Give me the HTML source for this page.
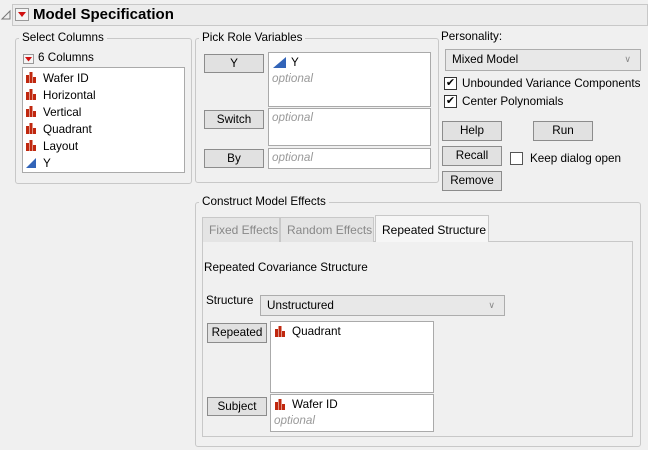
<!DOCTYPE html>
<html><head><style>
*{box-sizing:border-box;margin:0;padding:0}
body{width:648px;height:450px;background:#f0f0f0;font-family:"Liberation Sans",sans-serif;font-size:11.7px;color:#000;position:relative;overflow:hidden}
.a{position:absolute}
.grp{position:absolute;border:1px solid #c8c8c8;border-radius:3px}
.lbl{position:absolute;background:#f0f0f0;padding:0 3px;line-height:14px}
.box{position:absolute;background:#fff;border:1px solid #aaa}
.btn{position:absolute;background:#e1e1e1;border:1px solid #8c8c8c;text-align:center;line-height:17px}
.opt{color:#999;font-style:italic}
.dd{position:absolute;background:#e8e8e8;border:1px solid #adadad;padding-left:6px;line-height:19px}
.cb{position:absolute;width:13px;height:13px;background:#fff;border:1px solid #333;font-size:11px;line-height:11px;text-align:center}
.tab{position:absolute;border:1px solid #c8c8c8;border-bottom:none;background:#e4e4e4;color:#888;line-height:24px;padding-left:6px;font-size:12px}
svg.i{position:absolute}
</style></head><body>
<svg class="i" style="left:0;top:0" width="12" height="22"><path d="M2 19 L10 11 L10 19 Z" fill="none" stroke="#777"/></svg>
<div class="a" style="left:12px;top:4px;width:636px;height:22px;border:1px solid #c8c8c8;background:#ececec"></div>
<svg class="i" style="left:15px;top:8px" width="14" height="13"><rect x="0.5" y="0.5" width="13" height="12" fill="#f4f4f4" stroke="#999"/><path d="M3 4 L11 4 L7 9Z" fill="#d01010"/></svg>
<div class="a" style="left:33px;top:5px;font-size:15px;font-weight:bold;line-height:20px">Model Specification</div>

<div class="grp" style="left:15px;top:38px;width:177px;height:146px"></div>
<div class="lbl" style="left:19px;top:31px">Select Columns</div>
<svg class="i" style="left:23px;top:54px" width="11" height="10"><rect x="0.5" y="0.5" width="10" height="9" fill="#f4f4f4" stroke="#999"/><path d="M2 3 L9 3 L5.5 7.5Z" fill="#d01010"/></svg>
<div class="a" style="left:38px;top:51px;line-height:14px">6 Columns</div>
<div class="box" style="left:22px;top:67px;width:163px;height:106px"></div>
<svg class="i" style="left:26px;top:71px" width="12" height="100">
<g fill="#c0280f">
<g transform="translate(0,1)"><rect x="0" y="3" width="3" height="8"/><rect x="3.5" y="0" width="3" height="11"/><rect x="7" y="5" width="3" height="6"/></g>
<g transform="translate(0,18)"><rect x="0" y="3" width="3" height="8"/><rect x="3.5" y="0" width="3" height="11"/><rect x="7" y="5" width="3" height="6"/></g>
<g transform="translate(0,35)"><rect x="0" y="3" width="3" height="8"/><rect x="3.5" y="0" width="3" height="11"/><rect x="7" y="5" width="3" height="6"/></g>
<g transform="translate(0,52)"><rect x="0" y="3" width="3" height="8"/><rect x="3.5" y="0" width="3" height="11"/><rect x="7" y="5" width="3" height="6"/></g>
<g transform="translate(0,69)"><rect x="0" y="3" width="3" height="8"/><rect x="3.5" y="0" width="3" height="11"/><rect x="7" y="5" width="3" height="6"/></g>
</g>
<path d="M0 97 L10 87 L10 97 Z" fill="#3264b8"/></svg>
<div class="a" style="left:43px;top:70px;line-height:17px">Wafer ID<br>Horizontal<br>Vertical<br>Quadrant<br>Layout<br>Y</div>

<div class="grp" style="left:195px;top:38px;width:244px;height:145px"></div>
<div class="lbl" style="left:199px;top:31px">Pick Role Variables</div>
<div class="btn" style="left:204px;top:54px;width:60px;height:19px">Y</div>
<div class="box" style="left:268px;top:52px;width:163px;height:55px"></div>
<svg class="i" style="left:273px;top:56px" width="14" height="13"><path d="M0 12 L13 1 L13 12 Z" fill="#3264b8"/></svg>
<div class="a" style="left:291px;top:55px;line-height:15px">Y</div>
<div class="a opt" style="left:272px;top:72px">optional</div>
<div class="btn" style="left:204px;top:110px;width:60px;height:19px">Switch</div>
<div class="box" style="left:268px;top:108px;width:163px;height:38px"></div>
<div class="a opt" style="left:272px;top:111px">optional</div>
<div class="btn" style="left:204px;top:149px;width:60px;height:19px">By</div>
<div class="box" style="left:268px;top:148px;width:163px;height:21px"></div>
<div class="a opt" style="left:272px;top:151px">optional</div>

<div class="a" style="left:441px;top:30px;line-height:14px">Personality:</div>
<div class="dd" style="left:445px;top:49px;width:196px;height:22px">Mixed Model<span style="position:absolute;right:9px;top:0;color:#888;font-size:9px">&#8744;</span></div>
<div class="cb" style="left:444px;top:77px">✔</div>
<div class="a" style="left:462px;top:76px;line-height:15px">Unbounded Variance Components</div>
<div class="cb" style="left:444px;top:95px">✔</div>
<div class="a" style="left:462px;top:94px;line-height:15px">Center Polynomials</div>
<div class="btn" style="left:442px;top:121px;width:60px;height:20px">Help</div>
<div class="btn" style="left:533px;top:121px;width:60px;height:20px">Run</div>
<div class="btn" style="left:442px;top:146px;width:60px;height:20px">Recall</div>
<div class="cb" style="left:510px;top:152px;border-color:#555"></div>
<div class="a" style="left:530px;top:151px;line-height:15px">Keep dialog open</div>
<div class="btn" style="left:442px;top:171px;width:60px;height:20px">Remove</div>

<div class="grp" style="left:195px;top:202px;width:446px;height:245px"></div>
<div class="lbl" style="left:199px;top:195px">Construct Model Effects</div>
<div class="a" style="left:202px;top:241px;width:431px;height:196px;border:1px solid #c8c8c8"></div>
<div class="tab" style="left:202px;top:217px;width:78px;height:25px">Fixed Effects</div>
<div class="tab" style="left:280px;top:217px;width:94px;height:25px">Random Effects</div>
<div class="tab" style="left:375px;top:215px;width:114px;height:27px;background:#f6f6f6;color:#000;line-height:28px">Repeated Structure</div>
<div class="a" style="left:204px;top:260px;line-height:15px">Repeated Covariance Structure</div>
<div class="a" style="left:206px;top:293px;line-height:15px">Structure</div>
<div class="dd" style="left:260px;top:295px;width:245px;height:21px">Unstructured<span style="position:absolute;right:9px;top:0;color:#888;font-size:9px">&#8744;</span></div>
<div class="btn" style="left:207px;top:323px;width:60px;height:20px">Repeated</div>
<div class="box" style="left:270px;top:321px;width:164px;height:72px"></div>
<svg class="i" style="left:275px;top:326px" width="11" height="12"><g fill="#c0280f"><rect x="0" y="3" width="3" height="8"/><rect x="3.5" y="0" width="3" height="11"/><rect x="7" y="5" width="3" height="6"/></g></svg>
<div class="a" style="left:292px;top:324px;line-height:15px">Quadrant</div>
<div class="btn" style="left:207px;top:397px;width:60px;height:19px">Subject</div>
<div class="box" style="left:270px;top:394px;width:164px;height:38px"></div>
<svg class="i" style="left:275px;top:399px" width="11" height="12"><g fill="#c0280f"><rect x="0" y="3" width="3" height="8"/><rect x="3.5" y="0" width="3" height="11"/><rect x="7" y="5" width="3" height="6"/></g></svg>
<div class="a" style="left:292px;top:397px;line-height:15px">Wafer ID</div>
<div class="a opt" style="left:274px;top:414px">optional</div>
</body></html>
